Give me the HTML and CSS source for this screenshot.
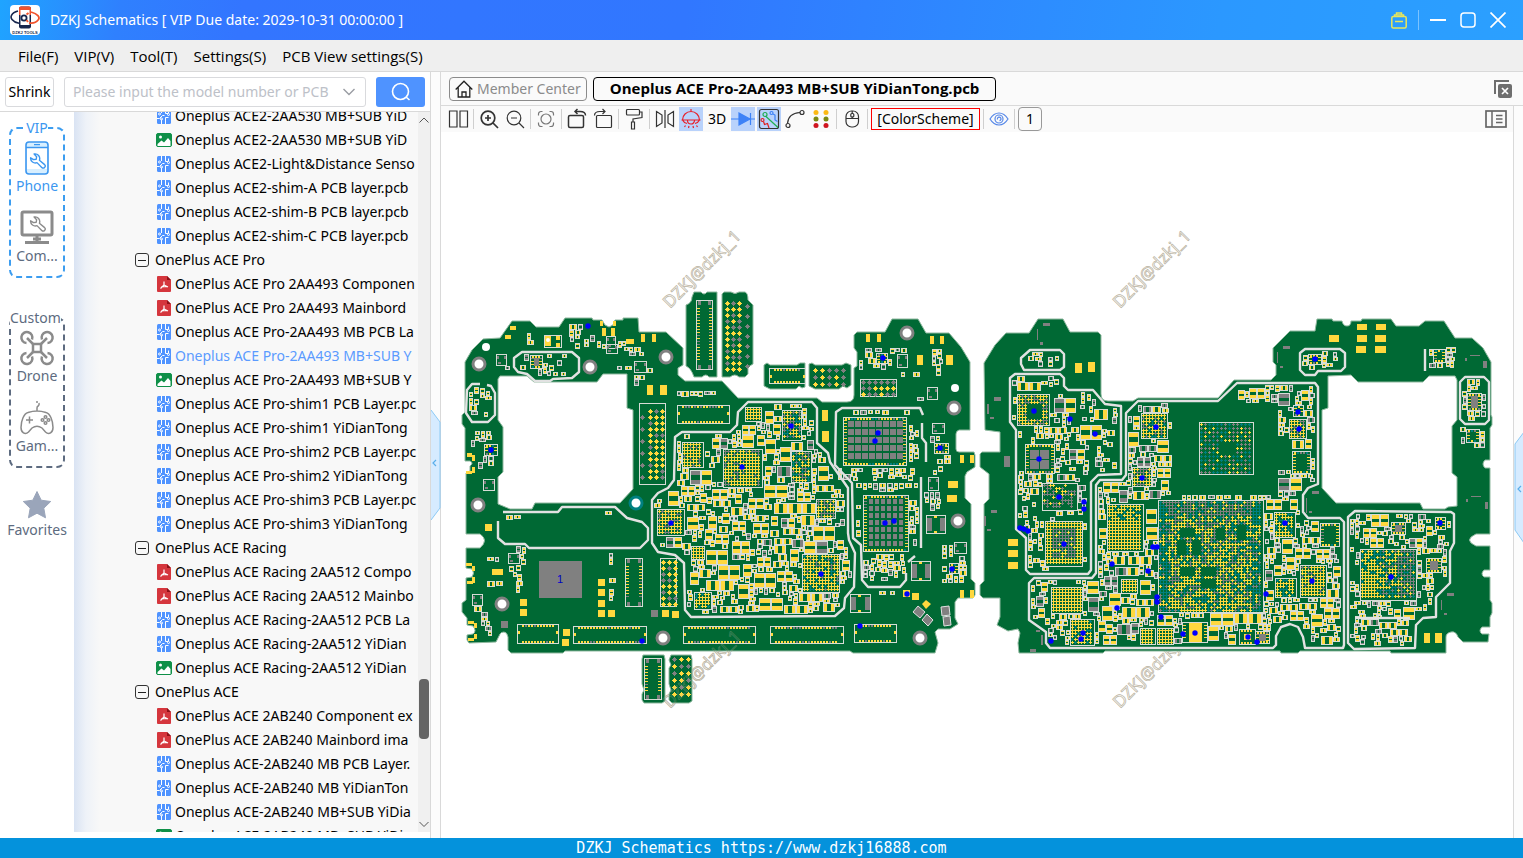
FILE: index.html
```html
<!DOCTYPE html>
<html lang="en">
<head>
<meta charset="utf-8">
<title>DZKJ Schematics</title>
<link rel="stylesheet" href="styles.css">
</head>
<body>
<svg class="defs" aria-hidden="true">
  <symbol id="pcb" viewBox="0 0 14 16"><rect width="14" height="16" rx="1.5" fill="#4f93ff"/><g fill="none" stroke="#fff" stroke-width="1"><path d="M4.500 0v5M8.500 0v5.500h2.500M0 10.500h2.500l3-3h2M4.500 16v-4.500M8.500 16V9.500h3M11.500 2.500V5"/><circle cx="2.500" cy="6" r="1"/><circle cx="11.500" cy="6.500" r="1"/><circle cx="4.500" cy="11" r="1"/></g></symbol>
  <symbol id="pdf" viewBox="0 0 14 16"><path d="M1 0h9l4 4v11a1 1 0 0 1-1 1H1a1 1 0 0 1-1-1V1a1 1 0 0 1 1-1z" fill="#d5363d"/><path d="M10 0l4 4h-4z" fill="#8d1218"/><path d="M7 5.500v3.500L3.500 12.500M7 9l4 2M4 11l6-.5" fill="none" stroke="#fff" stroke-width="1.200"/></symbol>
  <symbol id="img" viewBox="0 0 16 14"><rect x=".5" y=".5" width="15" height="13" rx="1.500" fill="#0f9048" stroke="#0f9048"/><path d="M1.500 11l4-3.500 2.500 2 4-4.500 2.500 3V13h-13z" fill="#fff"/><circle cx="4.500" cy="4" r="1.500" fill="#fff"/></symbol>
  <symbol id="wrench" viewBox="0 0 16 16"><path d="M1.500 5.500a4.500 4.500 0 0 0 6 4.500l4.500 4.500a1.800 1.800 0 0 0 2.700-2.600L9.800 7.800a4.500 4.500 0 0 0-5-6l2.400 2.600-.4 2.400-2.500.4z" fill="none" stroke="currentColor" stroke-width="1.300" stroke-linejoin="round"/></symbol>
</svg>

<header class="titlebar">
  <svg class="logo" viewBox="0 0 30 30" aria-hidden="true"><rect width="30" height="30" rx="4" fill="#fff"/><rect x="9" y="1.500" width="12" height="22" rx="2" fill="#17264d"/><path d="M9 10V3.500a2 2 0 0 1 2-2h8a2 2 0 0 1 2 2V10z" fill="#f0532d"/><rect x="10.500" y="5" width="9" height="15" fill="#fff"/><circle cx="14" cy="13" r="2.600" fill="none" stroke="#17264d" stroke-width="1.800"/><path d="M16.500 9.500l2-1.500M16.500 15l1.500 2" stroke="#f0532d" stroke-width="2"/><path d="M8 6C1 8 0 12 2 14.500 4 17 7 18 9 18.300" fill="none" stroke="#17264d" stroke-width="1.600"/><path d="M21 7c7 2 9 5 7.500 7.500C26 18 22 18.500 19 18" fill="none" stroke="#f0532d" stroke-width="1.800"/><text x="15" y="28.500" class="logo-text">DZKJ TOOLS</text></svg>
  <h1 class="app-title">DZKJ Schematics [ VIP Due date: 2029-10-31 00:00:00 ]</h1>
  <div class="window-controls">
    <button class="wc" aria-label="Toolbox"><svg width="16" height="17" viewBox="0 0 16 17" fill="none" stroke="#e9e65a" stroke-width="1.500"><rect x=".8" y="4.500" width="14.400" height="11.500" rx="1.500"/><path d="M3.500 4.500V3h9v1.500M5.500 3V1h5v2M4 9.500h8"/></svg></button>
    <span class="wc-sep"></span>
    <button class="wc" aria-label="Minimize"><svg width="16" height="16" viewBox="0 0 16 16"><path d="M0 8h16" stroke="#fff" stroke-width="2"/></svg></button>
    <button class="wc" aria-label="Maximize"><svg width="16" height="16" viewBox="0 0 16 16"><rect x="1" y="1" width="14" height="14" rx="3" fill="none" stroke="#fff" stroke-width="1.500"/></svg></button>
    <button class="wc" aria-label="Close"><svg width="16" height="16" viewBox="0 0 16 16"><path d="M.5.5l15 15M15.500.5l-15 15" stroke="#fff" stroke-width="1.700"/></svg></button>
  </div>
</header>

<nav class="menubar">
  <button>File(F)</button><button>VIP(V)</button><button>Tool(T)</button><button>Settings(S)</button><button>PCB View settings(S)</button>
</nav>

<main class="workspace">
  <section class="left-pane">
    <form class="search">
      <button type="button" class="shrink">Shrink</button>
      <div class="combo">
        <input type="text" aria-label="Model number" placeholder="Please input the model number or PCB">
        <button type="button" aria-label="Show history"><svg width="12" height="8" viewBox="0 0 12 8"><path d="M.5 1L6 6.500 11.500 1" fill="none" stroke="#9a9da3" stroke-width="1.400"/></svg></button>
      </div>
      <button type="button" class="go" aria-label="Search"><svg width="20" height="20" viewBox="0 0 20 20" fill="none" stroke="#fff" stroke-width="1.600"><circle cx="9.500" cy="9.500" r="8"/><path d="M15 15l3.500 3"/></svg></button>
    </form>
    <div class="browser">
      <div class="categories">
        <fieldset class="cat-group vip"><legend>VIP</legend>
          <button class="cat active"><svg viewBox="0 0 36 36"><rect x="7" y="2" width="22" height="32" rx="3" fill="#d8efff" stroke="currentColor" stroke-width="1.600"/><rect x="8" y="7" width="20" height="22" fill="#fff"/><path d="M7 7.500h22M15 4.700h6" stroke="currentColor" stroke-width="1.300"/><use href="#wrench" x="10" y="12" width="17" height="17"/></svg>Phone</button>
          <button class="cat"><svg viewBox="0 0 36 36"><rect x="3" y="2" width="30" height="23" rx="1.500" fill="none" stroke="#8b8b8b" stroke-width="3"/><path d="M18 25v6M6 32.500h24M14 29h8" stroke="#8b8b8b" stroke-width="3"/><g color="#8b8b8b"><use href="#wrench" x="10" y="5" width="17" height="17"/></g></svg>Com...</button>
        </fieldset>
        <fieldset class="cat-group custom"><legend>Custom</legend>
          <button class="cat"><svg viewBox="0 0 36 36" fill="none" stroke="#8b8b8b" stroke-width="2.500"><rect x="14" y="14" width="8" height="8"/><path d="M14 14L8 8M22 14l6-6M14 22l-6 6M22 22l6 6"/><path d="M13 9.500A5.500 5.500 0 1 0 7.500 13M23 9.500A5.500 5.500 0 1 1 28.500 13M13 26.500A5.500 5.500 0 1 1 7.500 23M23 26.500A5.500 5.500 0 1 0 28.500 23"/></svg>Drone</button>
          <button class="cat"><svg viewBox="0 0 36 36" fill="none" stroke="#8b8b8b" stroke-width="1.500"><path d="M9 12.500c6-2 12-2 18 0 4 1 7 8 7 15 0 5-4 8-7.500 4.500L23 28c-3-2-7-2-10 0l-3.500 4C6 35.500 2 32.500 2 27.500c0-7 3-14 7-15zM18 11V8c0-3 3-1 2-5M18 3V1M7 20h7M10.500 16.500v7"/><circle cx="26.500" cy="17" r="1.300"/><circle cx="26.500" cy="23" r="1.300"/><circle cx="23.500" cy="20" r="1.300"/><circle cx="29.500" cy="20" r="1.300"/></svg>Gam...</button>
        </fieldset>
        <button class="cat favorites"><svg viewBox="0 0 30 30"><path d="M15 1.500l4.200 8.700 9.500 1.300-6.900 6.700 1.700 9.600L15 23.200l-8.500 4.600 1.700-9.600L1.300 11.500l9.500-1.300z" fill="#9aa5ba" stroke="#9aa5ba" stroke-linejoin="round"/></svg>Favorites</button>
      </div>
      <div class="tree">
        <ul class="rows">
          <li><a href="#"><svg><use href="#pcb"/></svg>Oneplus ACE2-2AA530 MB+SUB YiD</a></li>
          <li><a href="#"><svg><use href="#img"/></svg>Oneplus ACE2-2AA530 MB+SUB YiD</a></li>
          <li><a href="#"><svg><use href="#pcb"/></svg>Oneplus ACE2-Light&amp;Distance Senso</a></li>
          <li><a href="#"><svg><use href="#pcb"/></svg>Oneplus ACE2-shim-A PCB layer.pcb</a></li>
          <li><a href="#"><svg><use href="#pcb"/></svg>Oneplus ACE2-shim-B PCB layer.pcb</a></li>
          <li><a href="#"><svg><use href="#pcb"/></svg>Oneplus ACE2-shim-C PCB layer.pcb</a></li>
          <li class="folder"><button aria-label="Collapse"></button>OnePlus ACE Pro</li>
          <li><a href="#"><svg><use href="#pdf"/></svg>OnePlus ACE Pro 2AA493 Componen</a></li>
          <li><a href="#"><svg><use href="#pdf"/></svg>OnePlus ACE Pro 2AA493 Mainbord</a></li>
          <li><a href="#"><svg><use href="#pcb"/></svg>Oneplus ACE Pro-2AA493 MB PCB La</a></li>
          <li><a href="#" class="current"><svg><use href="#pcb"/></svg>Oneplus ACE Pro-2AA493 MB+SUB Y</a></li>
          <li><a href="#"><svg><use href="#img"/></svg>Oneplus ACE Pro-2AA493 MB+SUB Y</a></li>
          <li><a href="#"><svg><use href="#pcb"/></svg>Oneplus ACE Pro-shim1 PCB Layer.pc</a></li>
          <li><a href="#"><svg><use href="#pcb"/></svg>Oneplus ACE Pro-shim1 YiDianTong</a></li>
          <li><a href="#"><svg><use href="#pcb"/></svg>Oneplus ACE Pro-shim2 PCB Layer.pc</a></li>
          <li><a href="#"><svg><use href="#pcb"/></svg>Oneplus ACE Pro-shim2 YiDianTong</a></li>
          <li><a href="#"><svg><use href="#pcb"/></svg>Oneplus ACE Pro-shim3 PCB Layer.pc</a></li>
          <li><a href="#"><svg><use href="#pcb"/></svg>Oneplus ACE Pro-shim3 YiDianTong</a></li>
          <li class="folder"><button aria-label="Collapse"></button>OnePlus ACE Racing</li>
          <li><a href="#"><svg><use href="#pdf"/></svg>OnePlus ACE Racing 2AA512 Compo</a></li>
          <li><a href="#"><svg><use href="#pdf"/></svg>OnePlus ACE Racing 2AA512 Mainbo</a></li>
          <li><a href="#"><svg><use href="#pcb"/></svg>Oneplus ACE Racing-2AA512 PCB La</a></li>
          <li><a href="#"><svg><use href="#pcb"/></svg>Oneplus ACE Racing-2AA512 YiDian</a></li>
          <li><a href="#"><svg><use href="#img"/></svg>Oneplus ACE Racing-2AA512 YiDian</a></li>
          <li class="folder"><button aria-label="Collapse"></button>OnePlus ACE</li>
          <li><a href="#"><svg><use href="#pdf"/></svg>OnePlus ACE 2AB240 Component ex</a></li>
          <li><a href="#"><svg><use href="#pdf"/></svg>OnePlus ACE 2AB240 Mainbord ima</a></li>
          <li><a href="#"><svg><use href="#pcb"/></svg>Oneplus ACE-2AB240 MB PCB Layer.</a></li>
          <li><a href="#"><svg><use href="#pcb"/></svg>Oneplus ACE-2AB240 MB YiDianTon</a></li>
          <li><a href="#"><svg><use href="#pcb"/></svg>Oneplus ACE-2AB240 MB+SUB YiDia</a></li>
          <li><a href="#"><svg><use href="#img"/></svg>Oneplus ACE-2AB240 MB+SUB YiDia</a></li>
        </ul>
        <div class="scrollbar">
          <svg width="10" height="16" viewBox="0 0 10 16"><path d="M.5 10.500L5 6l4.500 4.500" fill="none" stroke="#555"/></svg>
          <div class="track"><div class="thumb"></div></div>
          <svg width="10" height="16" viewBox="0 0 10 16"><path d="M.5 6L5 10.500 9.500 6" fill="none" stroke="#555"/></svg>
        </div>
      </div>
    </div>
  </section>

  <div class="gutter left"><button aria-label="Collapse file list"><svg width="10" height="112" viewBox="0 0 10 112"><path d="M0 1l9 12v86L0 111" fill="#d6ebff" stroke="#8ccaf5"/><path d="M5 51L2 54l3 3" fill="none" stroke="#5aaeea" stroke-width="1.200"/></svg></button></div>

  <section class="viewer">
    <div class="tabs">
      <button class="tab"><svg width="18" height="18" viewBox="0 0 18 18" fill="none" stroke="#222" stroke-width="1.300"><path d="M.7 9.500L9 1.200l8.300 8.300M3.200 7.500V17h11.600V7.500M7 17v-5h4v5"/></svg>Member Center</button>
      <button class="tab selected">Oneplus ACE Pro-2AA493 MB+SUB YiDianTong.pcb</button>
      <button class="close-all" aria-label="Close all"><svg width="18" height="18" viewBox="0 0 18 18"><path d="M1 14V1h14" fill="none" stroke="#6e6e6e" stroke-width="2"/><rect x="4" y="4" width="14" height="14" rx="2" fill="#6e6e6e"/><path d="M8 8l6 6M14 8l-6 6" stroke="#fff" stroke-width="1.700"/></svg></button>
    </div>
    <div class="lower">
      <div class="sheet">
        <div class="toolbar">
          <button aria-label="Split view"><svg viewBox="0 0 24 24"><path d="M3.500 4h7.500v16H3.500zM14 4h7.500v16H14z"/></svg></button><i></i>
          <button aria-label="Zoom in"><svg viewBox="0 0 24 24" class="bold"><circle cx="11" cy="11" r="6.800"/><path d="M16 16l5 5M11 8v6M8 11h6"/></svg></button>
          <button aria-label="Zoom out"><svg viewBox="0 0 24 24"><circle cx="11" cy="11" r="6.800"/><path d="M16 16l5 5M8 11h6"/></svg></button><i></i>
          <button aria-label="Fit"><svg viewBox="0 0 24 24" class="soft"><circle cx="12" cy="12" r="5"/><path d="M4.500 8.500V7a2.500 2.500 0 0 1 2.500-2.500h1.500M15.500 4.500H17A2.500 2.500 0 0 1 19.500 7v1.500M19.500 15.500V17a2.500 2.500 0 0 1-2.500 2.500h-1.500M8.500 19.500H7A2.500 2.500 0 0 1 4.500 17v-1.500"/></svg></button><i></i>
          <button aria-label="Rotate left"><svg viewBox="0 0 24 24" class="medium"><rect x="3.500" y="8.500" width="15" height="12" rx="1.500"/><path d="M10 4.500h5c3.500 0 5.500 1.500 5.500 4M12.500 2L10 4.500 12.500 7"/></svg></button>
          <button aria-label="Rotate right"><svg viewBox="0 0 24 24"><rect x="5.500" y="8.500" width="15" height="12" rx="1"/><path d="M14 4.500H9c-3.500 0-5.500 1.500-5.500 4M11.500 2L14 4.500 11.500 7"/></svg></button><i></i>
          <button aria-label="Paint"><svg viewBox="0 0 24 24"><rect x="4.500" y="2.500" width="13" height="5.500" rx="1"/><path d="M17.500 5h2.500v5.500l-9 1.500v3M9.500 15h3v7h-3z"/></svg></button><i></i>
          <button aria-label="Mirror"><svg viewBox="0 0 24 24"><path d="M3.500 4.500L9 8v8l-5.500 3.500zM12 3v18M20.500 4.500L15 8v8l5.500 3.500z"/></svg></button>
          <button class="on" aria-label="Lamp"><svg viewBox="0 0 24 24" class="red"><path d="M3.500 13a8.500 8.500 0 0 1 17 0M2.500 13h19M12 5V2M3.500 13c1 2 2 3 4.500 3.500M20.500 13c-1 2-2 3-4.500 3.500M8.500 13.500a3.500 3.500 0 0 0 7 0M6.500 18.500L5.500 20M17.500 18.500l1 1.500M10 19l-.5 2M14 19l.5 2"/></svg></button>
          <button class="label">3D</button>
          <button class="on" aria-label="Diode"><svg viewBox="0 0 24 24" class="blue"><path d="M0 12h24M19.500 6v12"/><path d="M8 6l11 6-11 6z" fill="#3d82f7"/></svg></button>
          <button class="on" aria-label="Nets"><svg viewBox="0 0 24 24"><rect x="2.500" y="2.500" width="19" height="19" rx="2"/><g stroke="#1fae50"><circle cx="8" cy="7.500" r="2"/><path d="M9 9.500l12 11"/></g><g stroke="#3d82f7"><circle cx="14.500" cy="6" r="1.500"/><path d="M16 7l2 1v5l2.500 1.500"/></g><g stroke="#e02020"><circle cx="5.500" cy="13" r="1.500"/><path d="M6.500 14.500l1 3 3-1 1.500 4.500"/></g></svg></button>
          <button aria-label="Route"><svg viewBox="0 0 24 24"><circle cx="5" cy="18.500" r="2"/><circle cx="19" cy="5.500" r="2"/><path d="M4.500 16.500C5 10 9 6 17 5.500"/></svg></button>
          <button aria-label="Colors"><svg viewBox="0 0 24 24" class="dots"><circle cx="7" cy="5.500" r="2.500" fill="#fcb913"/><circle cx="17" cy="5.500" r="2.500" fill="#fcb913"/><circle cx="7" cy="12" r="2.500" fill="#7c8a12"/><circle cx="17" cy="12" r="2.500" fill="#7c8a12"/><circle cx="7" cy="18.500" r="2.500" fill="#cf1620"/><circle cx="17" cy="18.500" r="2.500" fill="#cf1620"/></svg></button><i></i>
          <button aria-label="Mouse"><svg viewBox="0 0 24 24"><rect x="6" y="4" width="12.500" height="16" rx="5.500"/><path d="M6 11.500h12.500M12.200 4v2.500M12.200 9.500v2"/><rect x="10.800" y="6.500" width="3" height="3.500" rx="1"/></svg></button><i></i>
          <button class="scheme">[ColorScheme]</button><i></i>
          <button aria-label="Show"><svg viewBox="0 0 24 24" class="eye"><path d="M3 12c5-8 13-8 18 0-5 8-13 8-18 0z"/><circle cx="12" cy="12" r="4"/><path d="M10.500 12.500a1.800 1.800 0 1 1 2 1.200"/></svg></button><i></i>
          <button class="page">1</button>
          <button class="panel" aria-label="Side panel"><svg width="22" height="18" viewBox="0 0 22 18" fill="none" stroke="#666"><rect x="1" y="1" width="20" height="16" stroke-width="1.700"/><path d="M7 1v16" stroke-width="1.500"/><path d="M11 5.500h6.500M11 9h6.500M11 12.500h6.500" stroke-width="1.300"/></svg></button>
        </div>
        <svg class="board" viewBox="441 132 1072 706" role="img" aria-label="Oneplus ACE Pro board">
          <g class="mark">
            <text transform="translate(670 309) rotate(-45)">DZKJ@dzkj_1</text>
            <text transform="translate(1120 309) rotate(-45)">DZKJ@dzkj_1</text>
            <text transform="translate(1120 709) rotate(-45)">DZKJ@dzkj_1</text>
            <text transform="translate(670 709) rotate(-45)">DZKJ@dzkj_1</text>
          </g>
          <g class="pcb">
            <path fill-rule="evenodd" d="M465 362L472 350L483 339L500 338L512 321H530L536 327H559L565 318H592L593 320H602L605 325L609 327L613 325L615 320H623V318H638L639 332H666L683 348V365L678 368V375L685 381H722L738 398H817L822 402H847Q854 402 854 395V368L857 366V352L854 348V335L857 332H885L892 319H918L926 333H949L961 347L970 362V430H959Q956 431 956 434V449Q956 452 959 452H974L975 455V467L967 472L965 476V498L971 504V579L975 583V595L973 598H958L955 602V618L958 624L950 629H938L935 632L938 643L935 653H853L850 651H565L563 653H511L508 650V637Q507 632 504 632T500 634L496 642L469 643L467 640V635L473 634Q477 631 473 626L467 625V618L462 612V603L466 600V578L472 577Q475 573 472 569L466 568V548H480Q489 540 480 534H466V473L470 471V466Q474 463 470 461H465V428L462 424V415L465 412ZM500 376H527L534 382H597L603 374H627V408L633 410V489L620 503H535L532 509H510L498 504V477L503 472V427L498 420V379Z"/>
            <path fill-rule="evenodd" d="M1038 319H1063L1070 332H1098L1101 335V394Q1101 401 1108 401H1133L1138 398H1218L1234 380H1271L1276 375V365L1273 362V348L1290 331H1315L1317 319H1332L1333 321H1342Q1343 326 1347 326T1351 321H1361L1362 319H1391L1396 326H1419L1425 321H1444L1455 338H1472L1483 348L1491 362V415L1492 417V425L1490 428V460H1485Q1481 464 1485 468H1490V534H1476Q1463 540 1476 546H1490V570H1484Q1480 574 1484 577H1490V600L1492 603V613L1490 617V627H1482Q1478 631 1482 634H1489L1488 642H1463L1458 637Q1456 631 1451 632T1446 637V653H1391L1390 651H1300L1298 653H1281L1280 651H1105L1103 653H1019L1018 643L1020 633L1018 629L1008 631L997 625L1000 617V598H983L980 595V585L984 581V504L989 499V474L980 467V454L982 452H1000V432L985 430L984 363L995 345L1006 333H1029ZM1328 376L1351 375L1358 382H1423L1429 376H1455L1457 380V420L1452 426V473L1457 477V506L1448 507L1445 509H1423L1420 503H1336L1322 488V410L1328 408Z"/>
            <path d="M694 292H701Q704 296 707 292H717V377H709Q706 373 702 377H694Q691 368 686 366V305Q692 303 692 297Z"/>
            <path d="M724 292H731Q735 295 739 292H745Q748 293 748 300L753 305V364L748 367V374L745 377H739Q735 373 730 377H722V294Z"/>
            <path d="M764 365L767 363L770 365H797L800 363H805V387L802 388L799 386L796 389H770L764 386Z"/>
            <path d="M809 364L812 363L815 365H842L846 363L851 365V385L847 388L843 386L839 389H815L809 386Z"/>
            <path d="M643 655H664L665 659V701L662 703H644L642 700V694L644 690L642 684V659Z"/>
            <path d="M671 655H691L692 659V701L689 703H672L669 700V694L671 690L669 684V668L671 665L669 660Z"/>
          </g>
          <g id="layers"></g>
          <g class="mark over"><text transform="translate(670 709) rotate(-45)">DZKJ@dzkj_1</text></g>
          <rect x="539" y="561" width="43" height="37" fill="#808080"/>
          <text class="pin" x="557" y="583">1</text>
        </svg>
      </div>
      <div class="gutter right"><button aria-label="Expand side panel"><svg width="10" height="112" viewBox="0 0 10 112"><path d="M10 0L1 12v86l9 13" fill="#d6ebff" stroke="#8ccaf5"/><path d="M7 54l-3 3 3 3" fill="none" stroke="#5aaeea" stroke-width="1.200"/></svg></button></div>
    </div>
  </section>
</main>
<footer class="status">DZKJ Schematics https://www.dzkj16888.com</footer>
<script src="board.js"></script>
</body>
</html>
```

FILE: styles.css
```css
* { box-sizing: border-box; }
body { margin: 0; height: 100vh; display: flex; flex-direction: column; overflow: hidden; font: 14px/20px "Noto Sans", "Open Sans", sans-serif; color: #000; background: #fff; }
button { font: inherit; color: inherit; background: none; border: 0; padding: 0; margin: 0; }
svg { display: block; flex: none; }
.defs { width: 0; height: 0; position: absolute; }

.titlebar { flex: none; height: 40px; display: flex; align-items: center; padding: 0 17px 0 10px; background: linear-gradient(100deg, #1fa4ff 0, #2f80fe 120px, #3375ff 240px, #3177ff 45%, #2b98ff 80%, #2ba0ff 100%); }
.logo { width: 30px; height: 30px; }
.logo-text { font: bold 4px "Liberation Sans", sans-serif; text-anchor: middle; fill: #17264d; }
.app-title { margin: 0 0 0 10px; font: 400 14px/20px "Noto Sans", sans-serif; color: #fff; }
.window-controls { margin-left: auto; display: flex; align-items: center; gap: 14px; }
.wc-sep { width: 1px; height: 20px; margin: 0 -3px; background: #7cc3ff; }

.menubar { flex: none; height: 32px; display: flex; align-items: center; gap: 16px; padding: 0 18px; font-family: "Open Sans", sans-serif; font-size: 15px; background: #efefef; border-bottom: 1px solid #d9d9d9; }

.workspace { flex: 1; min-height: 0; display: flex; }
.left-pane { width: 431px; flex: none; display: flex; flex-direction: column; border-right: 1px solid #d9d9d9; }
.search { flex: none; height: 40px; display: flex; align-items: center; padding: 0 5px; border-bottom: 1px solid #d9d9d9; }
.shrink { width: 49px; height: 30px; border: 1px solid #d9dadd; border-radius: 3px; }
.combo { flex: 1; height: 30px; margin: 0 10px; display: flex; align-items: center; border: 1px solid #d9dadd; border-radius: 3px; padding: 0 10px 0 8px; }
.combo input { flex: 1; min-width: 0; border: 0; outline: 0; padding: 0; font: inherit; background: none; }
.combo input::placeholder { color: #bdc1c8; opacity: 1; }
.combo button { margin-left: 8px; }
.go { width: 49px; height: 30px; border-radius: 3px; background: #4f93ff; display: flex; align-items: center; justify-content: center; }

.browser { flex: 1; min-height: 0; display: flex; padding-bottom: 6px; }
.categories { width: 74px; flex: none; padding: 6px 9px 0; }
.cat-group { margin: 0 0 30px; padding: 0; min-width: 0; border: 2px dashed #3c9df0; border-radius: 8px; height: 160px; }
.cat-group legend { margin: 0 auto; padding: 0; color: #3c97f0; line-height: 20px; }
.cat-group.custom { border-color: #5d6b80; margin-bottom: 20px; }
.cat-group.custom legend { color: #5d6b80; margin: 0 -1px; }
.cat { width: 100%; height: 70px; padding-top: 2px; display: flex; flex-direction: column; align-items: center; color: #5d6b80; white-space: nowrap; }
.cat svg { width: 36px; height: 36px; }
.cat.active { color: #3c97f0; }
.cat.favorites svg { width: 30px; height: 30px; }

.tree { flex: 1; min-width: 0; display: flex; overflow: hidden; background: linear-gradient(90deg, #d9e3f3 0, #eef2f8 12px, #f8f8f8 26px); }
.rows { flex: 1; min-width: 0; margin: -8px 0 0; padding: 0; list-style: none; overflow: hidden; }
.rows li { height: 24px; white-space: nowrap; }
.rows a { display: flex; align-items: center; height: 24px; gap: 3px; padding-left: 82px; color: #000; text-decoration: none; }
.rows a svg { width: 16px; height: 16px; }
.rows a.current { color: #5b9bff; }
.folder { display: flex; align-items: center; gap: 6px; padding-left: 61px; }
.folder button { width: 14px; height: 14px; border: 1px solid #333; border-radius: 3px; display: flex; align-items: center; justify-content: center; }
.folder button::before { content: ""; width: 8px; height: 1px; background: #222; }
.scrollbar { width: 12px; flex: none; display: flex; flex-direction: column; align-items: center; background: #f0f0f0; }
.track { flex: 1; width: 10px; display: flex; flex-direction: column; }
.track::before { content: ""; flex: 551; }
.track::after { content: ""; flex: 77; }
.thumb { flex: 60; border-radius: 4px; background: #646464; }

.gutter { width: 10px; flex: none; display: flex; align-items: center; background: #fcfcfc; }
.gutter.left { padding-top: 20px; border-right: 1px solid #d9d9d9; }
.gutter.right { border-left: 1px solid #d9d9d9; padding-top: 32px; }

.viewer { flex: 1; min-width: 0; display: flex; flex-direction: column; }
.tabs { flex: none; height: 34px; display: flex; align-items: center; gap: 6px; padding: 0 11px 0 8px; background: #fafafa; border-bottom: 1px solid #d9d9d9; }
.tab { height: 24px; display: flex; align-items: center; gap: 4px; padding: 0 5px; border: 1px solid #8b8b8b; border-radius: 4px; color: #8b8b8b; }
.tab.selected { padding: 0 16px 2px; border-color: #000; color: #000; font: 700 15px/20px "Open Sans", sans-serif; }
.close-all { margin-left: auto; }
.lower { flex: 1; min-height: 0; display: flex; }
.sheet { flex: 1; min-width: 0; display: flex; flex-direction: column; }
.toolbar { flex: none; height: 26px; display: flex; align-items: center; gap: 2px; padding: 0 6px 0 5px; background: #fafafa; }
.toolbar button { width: 24px; height: 24px; flex: none; }
.toolbar button.on { background: #b9d2fb; }
.toolbar i { width: 1px; height: 20px; margin: 0 1px; background: #cfcfcf; }
.toolbar button:not(.panel) svg { width: 24px; height: 24px; fill: none; stroke: #333; stroke-width: 1.2; }
.toolbar button svg.bold { stroke-width: 1.7; }
.toolbar button svg.medium { stroke-width: 1.5; }
.toolbar button:not(.panel) svg.soft { stroke: #777; }
.toolbar button:not(.panel) svg.red { stroke: #e8202a; }
.toolbar button:not(.panel) svg.blue { stroke: #3d82f7; }
.toolbar button:not(.panel) svg.eye { stroke: #5587e8; }
.toolbar button:not(.panel) svg.dots { stroke: none; }
.toolbar button.scheme { width: 109px; height: 22px; line-height: 20px; border: 1px solid #f00; }
.toolbar button.page { border: 1px solid #999; border-radius: 4px; }
.toolbar button.panel { margin-left: auto; width: 22px; height: 18px; }

.board { flex: 1; min-height: 0; width: 100%; background: #fff; }
.pcb path { fill: #006934; stroke: #8fb99f; stroke-width: 1; }
.mark text { font: 17px "Noto Sans", sans-serif; fill: #fff; stroke: #b9b2a0; stroke-width: 0.7; }
.mark.over text { fill: none; opacity: 0.35; }
.pin { font: 11px "Liberation Sans", sans-serif; fill: #0000c8; }

.status { flex: none; height: 20px; background: #0492dc; color: #fff; text-align: center; font: 15px/20px "DejaVu Sans Mono", monospace; }
```

FILE: board.js
```js
// Draws the copper, silkscreen and parts of the board in board coordinates.
const X0 = 441, Y0 = 270, W = 1080, H = 450;
const used = new Uint8Array(W * H);
const ink = { w: '', y: '', g: '', t: '', G: '', b: '' };
let seed = 20291;
const rnd = () => { seed = (seed * 1103515245 + 12345) & 0x7fffffff; return seed / 0x7fffffff; };
const box = (c, x, y, w, h) => { if (w > 0 && h > 0) ink[c] += `M${x} ${y}h${w}v${h}h${-w}z`; };
const pick = s => s[Math.floor(rnd() * s.length)];

function claim(x, y, w, h) {
  for (let j = y; j < y + h; j++) for (let i = x; i < x + w; i++) used[(j - Y0) * W + i - X0] = 1;
}
function free(x, y, w, h) {
  for (let j = y; j < y + h; j++) for (let i = x; i < x + w; i++) if (used[(j - Y0) * W + i - X0]) return false;
  return true;
}
function frame(x, y, w, h) {
  box('w', x, y, w, 1); box('w', x, y + h - 1, w, 1); box('w', x, y + 1, 1, h - 2); box('w', x + w - 1, y + 1, 1, h - 2);
}
function part(x, y, w, h) {
  claim(x, y, w, h);
  frame(x, y, w, h);
  const c = pick(w * h > 50 ? 'yyyyyyyg' : 'yyyg');
  if (w >= h) { const p = Math.max(1, Math.round((w - 2) / 3)); box(c, x + 1, y + 1, p, h - 2); box(c, x + w - 1 - p, y + 1, p, h - 2); }
  else { const p = Math.max(1, Math.round((h - 2) / 3)); box(c, x + 1, y + 1, w - 2, p); box(c, x + 1, y + h - 1 - p, w - 2, p); }
}
const inside = (poly, x, y) => {
  let r = false;
  for (let i = 0, j = poly.length - 1; i < poly.length; j = i++) {
    const [a, b] = poly[i], [c, d] = poly[j];
    if ((b > y) !== (d > y) && x < (c - a) * (y - b) / (d - b) + a) r = !r;
  }
  return r;
};
const small = [[5, 4], [4, 5], [7, 4], [4, 7], [6, 5], [5, 6], [7, 5], [5, 7], [8, 6]];
const large = [[9, 13], [12, 13], [11, 15], [12, 9], [9, 7], [7, 10], [14, 11], [8, 11]];
function fill(poly, density, bigShare) {
  const xs = poly.map(p => p[0]), ys = poly.map(p => p[1]);
  const fits = (x, y, w, h) => free(x, y, w, h) && [[x - 2, y - 2], [x + w + 2, y - 2], [x - 2, y + h + 2], [x + w + 2, y + h + 2]].every(p => inside(poly, p[0], p[1]));
  const l = Math.min(...xs), r = Math.max(...xs), t = Math.min(...ys), b = Math.max(...ys);
  const tries = Math.round((r - l) * (b - t) * bigShare / 60);
  for (let k = 0; k < tries; k++) {
    const [w, h] = pick(large), x = Math.floor(l + rnd() * (r - l)), y = Math.floor(t + rnd() * (b - t));
    if (!fits(x, y, w, h)) continue;
    part(x, y, w, h);
    if (fits(x + w, y, w, h)) part(x + w, y, w, h);
  }
  for (let y = t; y < b; y++) for (let x = l; x < r; x++) {
    if (!free(x, y, 3, 3)) continue;
    const [w, h] = pick(small);
    if (!fits(x, y, w, h)) continue;
    if (rnd() > density) { claim(x, y, w, h); continue; }
    part(x, y, w, h);
    if (rnd() < .6) claim(x + w, y, 1, h);
  }
}
const area = (x, y, w, h) => [[x - 2, y - 2], [x + w + 2, y - 2], [x + w + 2, y + h + 2], [x - 2, y + h + 2]];

const plus = (c, x, y, a) => { box(c, x - a, y, 2 * a + 1, 1); box(c, x, y - a, 1, a); box(c, x, y + 1, 1, a); };
// Ball grid; hue decides the ball colour, hole is the share of the side left free.
function grid(x, y, w, h, step, hue, hole) {
  claim(x - 1, y - 1, w + 2, h + 2);
  frame(x - 1, y - 1, w + 2, h + 2);
  for (let j = y + 1; j < y + h - 1; j += step) for (let i = x + 1; i < x + w - 1; i += step) {
    if (hole && i > x + w * hole && i < x + w * (1 - hole) && j > y + h * hole && j < y + h * (1 - hole)) continue;
    plus(typeof hue === 'string' ? pick(hue) : hue(i, j), i, j, 1);
  }
}
function pads(x, y, w, h, hue) {
  for (let i = x + 2; i < x + w - 3; i += 3) { box(pick(hue), i, y + 1, 2, 2); box(pick(hue), i, y + h - 3, 2, 2); }
}
function sidePads(x, y, w, h, hue) {
  for (let j = y + 3; j < y + h - 3; j += 3) { box(pick(hue), x + 1, j, 3, 1); box(pick(hue), x + w - 4, j, 3, 1); }
}
function qfp(x, y, w, h, cols, rows, cw, ch, px, py, ox, oy) {
  claim(x, y, w, h); frame(x, y, w, h); pads(x, y, w, h, 'yyyygt'); sidePads(x, y, w, h, 'yyyg');
  for (let j = 0; j < rows; j++) for (let i = 0; i < cols; i++) box('g', ox + i * px, oy + j * py, cw, ch);
}
function connector(x, y, w, h, hue) {
  claim(x, y, w, h); frame(x, y, w, h);
  if (w > h) { pads(x + 3, y, w - 6, h, hue); box('y', x + 1, y + 7, 2, 3); box('y', x + w - 3, y + 7, 2, 3); }
  else { sidePads(x, y + 5, w, h - 10, hue); box('g', x + 2, y + 1, 3, 4); box('g', x + w - 5, y + 1, 3, 4); box('g', x + 2, y + h - 5, 3, 4); box('g', x + w - 5, y + h - 5, 3, 4); }
}
function lattice(x, y, w, h, step, hue) {
  for (let j = y; j <= y + h; j += step) for (let i = x; i <= x + w; i += step) { const c = pick(hue); plus(c, i, j, 2); box(c, i - 1, j - 1, 3, 3); }
}

// Shield walls
const walls = {
  main: [[722,432],[682,432],[675,437],[674,480],[668,488],[658,493],[652,500],[652,543],[658,552],[675,555],[684,563],[685,610],[691,617],[835,616],[844,608],[845,598],[854,587],[855,553],[849,540],[848,533],[848,497],[848,488],[830,462],[828,453],[817,443],[817,408],[812,402],[748,402],[738,412],[737,425],[730,432]],
  top: [[522,352],[572,352],[579,358],[579,372],[572,378],[553,379],[550,381],[535,381],[527,374],[518,372],[514,367],[514,358]],
  r1: [[1030,350],[1060,350],[1064,354],[1064,367],[1060,370],[1024,370],[1021,364],[1021,358]],
  r2: [[1015,374],[1060,374],[1064,378],[1064,386],[1068,390],[1093,390],[1105,404],[1121,406],[1121,474],[1098,475],[1091,482],[1091,570],[1088,574],[1030,574],[1026,570],[1026,538],[1016,529],[1016,430],[1010,422],[1010,378]],
  r3: [[1126,413],[1138,401],[1218,401],[1237,383],[1315,383],[1318,387],[1318,484],[1308,488],[1303,495],[1303,512],[1308,518],[1340,518],[1344,522],[1344,645],[1343,648],[1305,648],[1303,637],[1298,627],[1290,624],[1281,627],[1276,636],[1276,645],[1273,648],[1050,648],[1046,643],[1046,632],[1029,620],[1029,583],[1034,578],[1092,578],[1096,573],[1096,485],[1100,480],[1122,480],[1126,475]],
  r4: [[1305,349],[1340,349],[1345,353],[1345,367],[1341,371],[1318,371],[1315,375],[1305,375],[1300,370],[1300,353]],
  r5: [[1465,377],[1484,377],[1489,382],[1489,420],[1485,424],[1465,424],[1460,419],[1460,382]],
  r6: [[1355,511],[1451,512],[1454,514],[1454,543],[1450,551],[1450,583],[1436,597],[1436,617],[1423,618],[1416,625],[1415,648],[1354,649],[1348,643],[1348,517]]
};
const side = [[480,384],[472,384],[467,390],[466,413],[472,422],[488,422],[495,415],[495,393],[491,386],[487,385]];
const open = [side,
  [[503,512],[558,512],[562,507],[615,507],[627,518],[642,522],[648,528],[648,540],[640,548],[529,548],[525,544],[505,544],[498,538],[498,521]],
  [[923,415],[920,408],[842,408],[836,412],[835,465],[852,483],[853,538],[861,545],[862,580],[868,587],[900,587],[906,580],[906,573]],
  [[922,423],[922,438],[926,443],[926,462]], [[921,477],[921,548]], [[1355,618],[1410,618]], [[1425,349],[1425,371]], [[908,562],[915,556]]];

// Ball grids
grid(724,450,38,37,3,(i,j)=>rnd()<.15||Math.abs(i-742)+Math.abs(j-468)>29?'g':'y');
grid(783,411,18,29,3,'ygtyg'); grid(792,452,19,30,3,'yggyt'); grid(746,408,15,13,3,'y');
grid(683,443,20,24,3,'yyyyg'); grid(658,510,26,25,3,'yyyyg'); grid(692,547,12,12,3,'y'); grid(695,593,16,16,3,'yyyt');
grid(803,555,36,37,3,'yyyyygt'); grid(817,500,18,18,3,'yyg');
grid(1018,395,31,30,3,'yyygg',.25); grid(1043,484,34,26,3,'gggGGy'); grid(1046,522,36,44,3,(i,j)=>i<1053||i>1075||j<528||j>557?'y':pick('ygg'));
grid(1142,414,25,24,3,'yyyyytg'); grid(1200,423,53,51,4,'ggtty',.36); grid(1133,468,18,18,3,'yyg');
grid(1108,505,35,46,3,(i,j)=>j<520?pick('yyt'):'y');
const gaps = [[1181,527,13,9],[1215,527,8,13],[1236,524,8,14],[1178,540,8,15],[1191,540,8,13],[1181,566,13,9],[1202,567,12,8],[1202,579,12,9]];
grid(1159,501,104,111,3,(i,j)=>{
  if (gaps.some(([x,y,w,h])=>i>=x&&i<=x+w&&j>=y&&j<=y+h)) return 'G';
  if (i<1168||i>1252) return pick('tttyg'); if (j>590) return pick('yyygt'); if (j<515) return pick('ygggt'); return pick('yyyggt');
});
grid(1052,588,30,25,3,'y'); grid(1071,620,23,25,3,'yyyyt'); grid(1122,580,15,13,3,'y');
grid(1290,420,16,18,3,'yyyg'); grid(1275,513,20,24,3,'yyt'); grid(1301,566,25,31,3,'yyyyyyg'); grid(1276,579,20,18,3,'yyyt');
grid(1361,550,55,50,3,(i,j)=>i<1380?pick('yyyyt'):i>1395?pick('ygggt'):pick('ytygt'));
grid(1141,629,14,15,3,'y'); grid(1158,629,15,15,3,'y');

// Leaded packages
qfp(843,417,64,49,8,5,6,6,7,8,848,421);
qfp(863,495,46,57,6,7,4,5,6,7,869,499);
qfp(1025,444,30,30,2,2,9,9,10,10,1030,450);
[[1391,522,15,13],[1426,558,16,15],[1467,393,15,18],[530,355,13,14],[1255,631,15,13]].forEach(a=>qfp(...a,1,1,a[2]-8,a[3]-6,1,1,a[0]+4,a[1]+3));
[[1320,523,20,24],[1292,451,19,23],[1433,349,13,14],[1466,429,14,14],[1435,517,11,13],[1308,354,14,11],[484,444,14,12],[949,563,10,11],[934,443,15,11],[876,353,12,11],[1293,405,11,12]].forEach(a=>qfp(...a,0,0));
[[850,594,21,19],[926,515,20,19],[911,561,20,20]].forEach(([x,y,w,h])=>{ claim(x,y,w,h); frame(x,y,w,h); box('g',x+1,y+3,5,h-6); box('g',x+w-6,y+3,5,h-6); box('y',x+w/2-2|0,y+1,3,2); box('y',x+w/2-2|0,y+h-3,3,2); });
[[496,354,11,12],[508,553,12,11],[472,594,11,12],[483,479,12,12],[606,336,10,13],[606,344,12,10],[634,361,13,12],[897,354,11,14],[927,387,11,13],[954,542,13,12],[928,477,11,14],[932,423,13,11]].forEach(([x,y,w,h])=>{ claim(x,y,w,h); frame(x,y,w,h); box('g',x+1,y+2,2,3); box('g',x+w-3,y+2,2,3); box('g',x+2,y+h-4,3,2); });
claim(544,335,18,13); frame(544,335,18,13); box('y',556,336,4,4); box('y',556,343,4,4); box('y',545,336,6,10);
claim(1182,622,26,21); frame(1182,622,26,21); box('y',1189,623,13,19); sidePads(1182,622,26,21,'y');
claim(1239,629,17,16); frame(1239,629,17,16); pads(1239,629,17,16,'y'); box('y',1244,634,7,6);

// Connectors
[[677,405,53,19],[696,300,17,70],[769,368,37,16],[517,624,42,20],[573,626,74,18],[683,626,73,18],[770,626,74,18],[854,624,43,19],[625,558,18,49],[644,658,18,42]].forEach(a=>connector(...a,'yyyyg'));
frame(639,403,27,82); lattice(650,411,13,68,6,'yyg'); lattice(642,417,0,60,12,'g');
frame(660,558,17,49); lattice(663,562,12,42,6,'yyg'); frame(860,379,37,18); lattice(863,382,31,12,6,'ygy');
lattice(727,303,12,70,6,'yyg'); lattice(747,306,0,60,10,'g'); lattice(815,370,30,14,7,'gy'); lattice(674,659,16,40,7,'yyg');

// Discrete parts
claim(1172,403,106,92); claim(1172,399,50,14); claim(1279,440,10,30);
fill(walls.main,.7,2); fill(walls.top,.66,0); fill(side,.66,0);
fill(walls.r1,.6,0); fill(walls.r2,.5,.08); fill(walls.r3,.68,1.6); fill(walls.r4,.7,0); fill(walls.r5,.7,0); fill(walls.r6,.58,.2);
[[569,324,15,26],[584,334,12,14],[597,341,30,12],[624,347,24,10],[616,366,18,5],[647,364,8,14],[634,375,12,14],[500,366,14,6],[514,345,8,4],[521,333,14,14],[475,431,20,12],[470,440,12,8],[478,456,20,14],[487,492,9,5],[672,391,50,7],[690,386,8,5],
[859,348,34,24],[890,348,22,10],[932,349,12,28],[897,372,26,7],[916,397,25,7],[925,418,18,5],[930,436,16,8],[932,455,22,10],[951,438,4,20],
[846,410,70,6],[838,468,82,14],[856,483,64,10],[909,425,11,42],[909,500,11,50],[856,502,6,38],[838,425,4,35],[863,554,44,28],[876,591,20,5],[924,492,18,20],[926,466,18,10],[942,545,12,40],[953,556,16,30],
[482,557,24,7],[516,546,11,26],[509,566,9,12],[516,574,8,20],[487,581,18,8],[474,606,12,10],[481,612,12,26],[609,553,9,52],[504,515,22,6],[604,511,10,5],[1429,347,28,24],[1460,427,28,22],[1461,442,6,6],[1078,380,12,3]]
  .forEach(a=>fill(area(...a),.76,0));

// Bare pads
[[647,385,6,10],[660,385,7,10],[641,334,4,8],[652,334,4,8],[602,328,4,8],[611,328,4,8],[600,321,3,5],[613,321,3,5],[626,339,8,5],[822,410,6,11],[822,431,7,11],[866,334,4,8],[877,334,4,8],[930,336,4,8],[940,336,4,8],[917,355,6,10],[946,355,7,10],[960,455,4,8],[970,455,4,8],[948,481,10,7],[947,495,10,7],[912,593,7,7],[903,590,7,7],[960,590,4,8],[970,590,4,8],[485,524,7,7],[492,569,11,6],[520,599,7,7],[520,609,7,7],[598,579,7,7],[598,589,7,7],[598,600,7,7],[598,610,7,7],[608,610,7,7],[662,610,7,7],[672,611,7,7],[563,629,7,7],[562,639,7,7],[1075,363,7,10],[1088,362,7,10],[1008,539,10,7],[1008,550,10,7],[1008,562,10,7],[1357,324,10,6],[1376,324,10,6],[1357,335,10,7],[1375,335,11,7],[1356,346,10,7],[1375,346,11,7],[1329,335,10,7],[1424,633,6,10],[1435,633,7,10],[510,326,6,4],[505,335,6,4],[467,453,5,4],[472,455,3,6],[472,467,3,6],[466,471,6,3],[466,563,6,3],[472,566,3,5],[472,577,3,6],[467,581,6,3],[468,621,6,3],[474,623,3,5],[474,634,3,5],[468,638,6,3]].forEach(a=>box('y',...a));
[[651,610,7,7],[501,621,7,7],[994,397,7,4],[987,404,2,10],[990,417,4,2],[1004,456,6,11],[991,510,6,3],[984,516,2,10],[987,529,4,2],[1043,323,7,3],[1037,329,1,11],[1040,342,3,3],[1036,630,4,2],[1041,635,2,10],[1030,649,6,3],[1283,346,7,3],[1277,352,1,11],[1280,366,3,2],[1483,361,4,7],[1470,355,10,1],[1465,358,2,3],[1312,491,7,3],[1306,498,1,15],[1309,511,3,2],[1471,496,10,1],[1466,499,2,3],[1485,502,3,7],[1447,593,7,3],[1441,600,1,10],[1444,613,3,2]].forEach(a=>box('g',...a));

const color = { w: '#d6dcd6', y: '#ffd83e', g: '#808080', t: '#008080' };
const line = (pts, close) => `<path d="M${pts.map(p => p.join(' ')).join('L')}${close ? 'z' : ''}" fill="none" stroke="#e2e2e2" stroke-width="2.4" stroke-linejoin="round"/>`;
let out = '<g shape-rendering="crispEdges">' + ['w', 'y', 'g', 't'].map(k => `<path d="${ink[k]}" fill="${color[k]}"/>`).join('') + '</g>';
out += Object.values(walls).map(p => line(p, true)).join('') + open.map(p => line(p)).join('');
out += '<g fill="#808080" stroke="#e2e2e2"><path d="M918 606l7 6-5 6-7-6zM927 614l6 6-5 6-6-6zM941 607l8-1 1 9-8 1zM943 617l7-1 1 9-7 1z"/></g><path d="M926 600l5 4-5 5-4-5z" fill="#ffd83e"/>';
const ring = (x, y, c) => `<circle cx="${x}" cy="${y}" r="6" fill="#fff" stroke="${c}" stroke-width="3"/>`;
out += [[479,364],[590,367],[666,357],[907,333],[954,408],[478,505],[502,604],[663,638],[958,521],[920,638]].map(p => ring(p[0], p[1], '#808080')).join('') + ring(636, 503, '#008080');
out += [[486,347],[955,388],[548,340]].map(([x, y], i) => `<circle cx="${x}" cy="${y}" r="${i > 1 ? 2 : 4}" fill="#fff"/>`).join('');
out += [[588,326],[491,450],[791,426],[742,467],[671,523],[883,358],[878,433],[875,441],[940,448],[885,523],[894,521],[821,574],[907,594],[952,569],[642,641],[860,626],[1034,411],[1070,419],[1095,434],[1039,459],[1059,497],[1084,502],[1084,509],[1020,528],[1024,529],[1028,531],[1064,544],[1156,427],[1142,478],[1112,564],[1148,571],[1153,547],[1157,547],[1157,597],[1157,602],[1117,608],[1161,617],[1183,634],[1195,633],[1248,637],[1083,633],[1081,639],[1051,641],[1315,359],[1298,412],[1299,429],[1285,523],[1312,581],[1266,594],[1257,642],[1391,577],[1440,523]].map(([x, y]) => `<circle cx="${x}" cy="${y}" r="2.700" fill="#00f"/>`).join('');
document.getElementById('layers').innerHTML = out;
```
